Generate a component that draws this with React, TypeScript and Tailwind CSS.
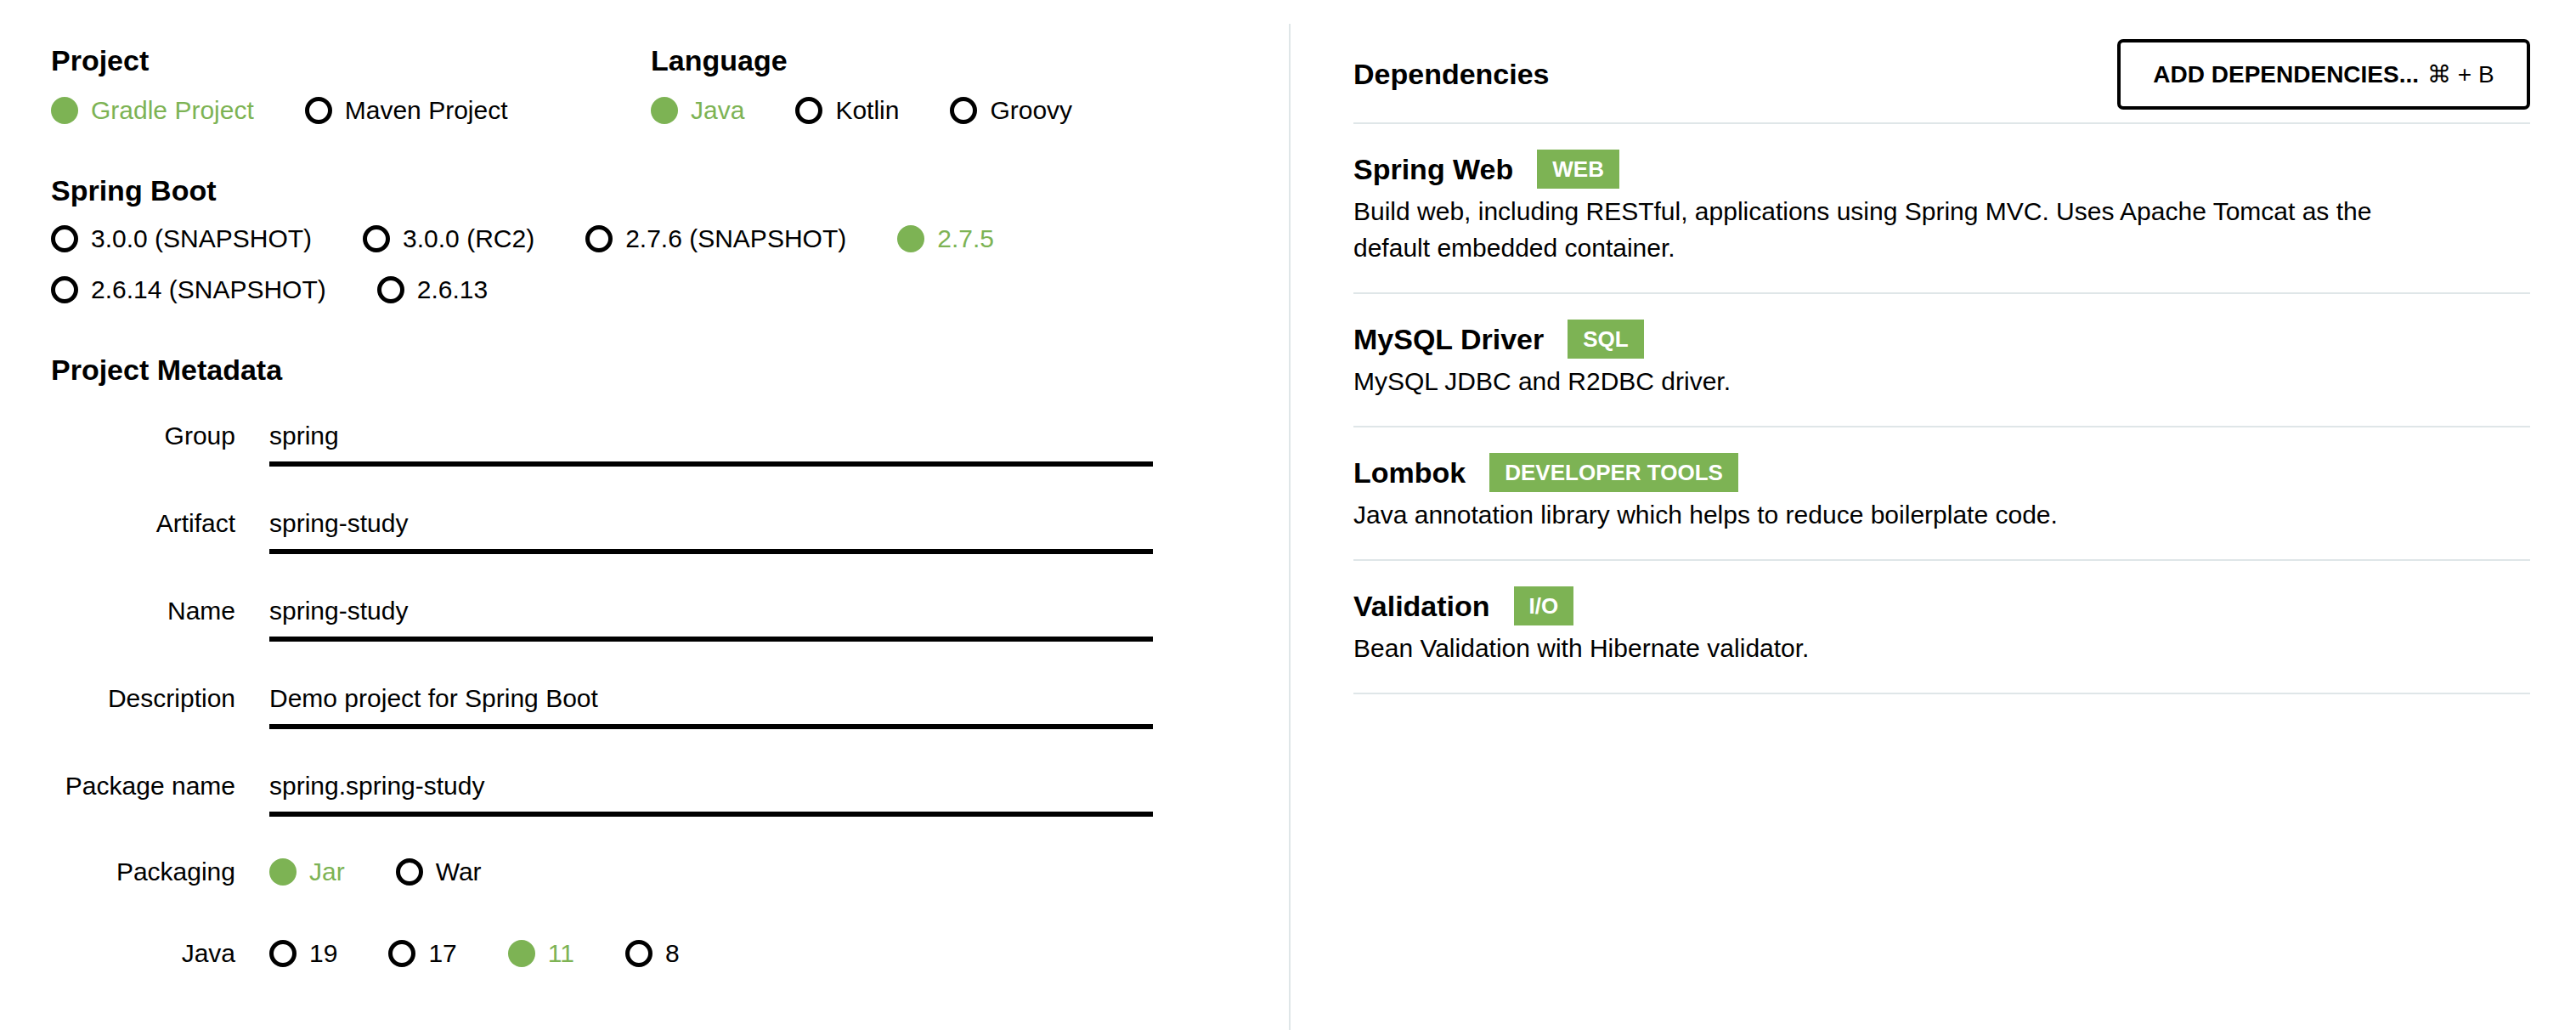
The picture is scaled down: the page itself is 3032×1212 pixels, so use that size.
import React from "react";

const GREEN = "text-[#7db354]";

type RadioProps = { label: string; checked?: boolean };

const Radio = ({ label, checked }: RadioProps) => {
  return (
    <div className="flex items-center gap-[15px] h-[45px]">
      {checked ? (
        <span className="block w-[32px] h-[32px] rounded-full bg-[#7db354]" />
      ) : (
        <span className="block w-[32px] h-[32px] rounded-full border-[5px] border-black bg-white" />
      )}
      <span className={checked ? GREEN : "text-black"}>{label}</span>
    </div>
  );
};

const RadioRow = ({ options, selected }: { options: string[]; selected: string }) => (
  <div className="flex flex-wrap gap-x-[60px] gap-y-[15px]">
    {options.map((o) => (
      <Radio key={o} label={o} checked={o === selected} />
    ))}
  </div>
);

const Heading = ({ children }: { children: React.ReactNode }) => (
  <h2 className="text-[34px] leading-[40px] font-bold text-black">{children}</h2>
);

const Field = ({ label, value }: { label: string; value: string }) => (
  <div className="flex items-start">
    <div className="w-[217px] text-right leading-[45px]">{label}</div>
    <div className="ml-[40px] w-[1040px] leading-[45px] pb-[8px] border-b-[6px] border-black">
      {value}
    </div>
  </div>
);

type DepProps = { title: string; tag: string; desc: string };

const Dependency = ({ title, tag, desc }: DepProps) => (
  <div className="pt-[30px] pb-[31px] border-b-2 border-[#dfe6e8]">
    <div className="flex items-center gap-[28px] h-[46px]">
      <span className="text-[34px] font-bold leading-[40px]">{title}</span>
      <span className="h-[46px] px-[18px] flex items-center bg-[#7db354] text-white text-[26px] font-bold uppercase">
        {tag}
      </span>
    </div>
    <p className="mt-[5px] max-w-[1250px] text-[30px] leading-[43px]">{desc}</p>
  </div>
);

export default function App() {
  return (
    <div
      className="flex h-[1212px] w-[3032px] bg-white text-black text-[30px] overflow-hidden"
      style={{ fontFamily: '"Liberation Sans", Arial, Helvetica, sans-serif' }}
    >
      {/* left: project settings */}
      <div className="w-[1517px] shrink-0 pl-[60px] pr-[60px] pt-[51px]">
        <div className="flex">
          <div className="w-[706px]">
            <Heading>Project</Heading>
            <div className="mt-[16px]">
              <RadioRow options={["Gradle Project", "Maven Project"]} selected="Gradle Project" />
            </div>
          </div>
          <div>
            <Heading>Language</Heading>
            <div className="mt-[16px]">
              <RadioRow options={["Java", "Kotlin", "Groovy"]} selected="Java" />
            </div>
          </div>
        </div>

        <div className="mt-[52px]">
          <Heading>Spring Boot</Heading>
          <div className="mt-[14px]">
            <RadioRow
              options={[
                "3.0.0 (SNAPSHOT)",
                "3.0.0 (RC2)",
                "2.7.6 (SNAPSHOT)",
                "2.7.5",
                "2.6.14 (SNAPSHOT)",
                "2.6.13",
              ]}
              selected="2.7.5"
            />
          </div>
        </div>

        <div className="mt-[52px]">
          <Heading>Project Metadata</Heading>
          <div className="mt-[35px] flex flex-col gap-[44px]">
            <Field label="Group" value="spring" />
            <Field label="Artifact" value="spring-study" />
            <Field label="Name" value="spring-study" />
            <Field label="Description" value="Demo project for Spring Boot" />
            <Field label="Package name" value="spring.spring-study" />
          </div>
          <div className="mt-[42px] flex items-center">
            <div className="w-[217px] text-right leading-[45px]">Packaging</div>
            <div className="ml-[40px]">
              <RadioRow options={["Jar", "War"]} selected="Jar" />
            </div>
          </div>
          <div className="mt-[51px] flex items-center">
            <div className="w-[217px] text-right leading-[45px]">Java</div>
            <div className="ml-[40px]">
              <RadioRow options={["19", "17", "11", "8"]} selected="11" />
            </div>
          </div>
        </div>
      </div>

      {/* right: dependencies */}
      <div className="flex-1 mt-[28px] border-l-2 border-[#dfe6e8] pl-[74px] pr-[54px]">
        <div className="flex items-center justify-between pt-[18px] pb-[15px] border-b-2 border-[#dfe6e8]">
          <h2 className="text-[34px] font-bold leading-[40px] -mt-[2px]">Dependencies</h2>
          <button className="w-[486px] h-[83px] flex items-center justify-center border-4 border-black rounded-[7px] bg-white text-[28px]">
            <span className="font-bold">ADD DEPENDENCIES...</span>
            <span className="ml-[10px]">⌘ + B</span>
          </button>
        </div>
        <Dependency
          title="Spring Web"
          tag="Web"
          desc="Build web, including RESTful, applications using Spring MVC. Uses Apache Tomcat as the default embedded container."
        />
        <Dependency title="MySQL Driver" tag="SQL" desc="MySQL JDBC and R2DBC driver." />
        <Dependency
          title="Lombok"
          tag="Developer Tools"
          desc="Java annotation library which helps to reduce boilerplate code."
        />
        <Dependency
          title="Validation"
          tag="I/O"
          desc="Bean Validation with Hibernate validator."
        />
      </div>
    </div>
  );
}
